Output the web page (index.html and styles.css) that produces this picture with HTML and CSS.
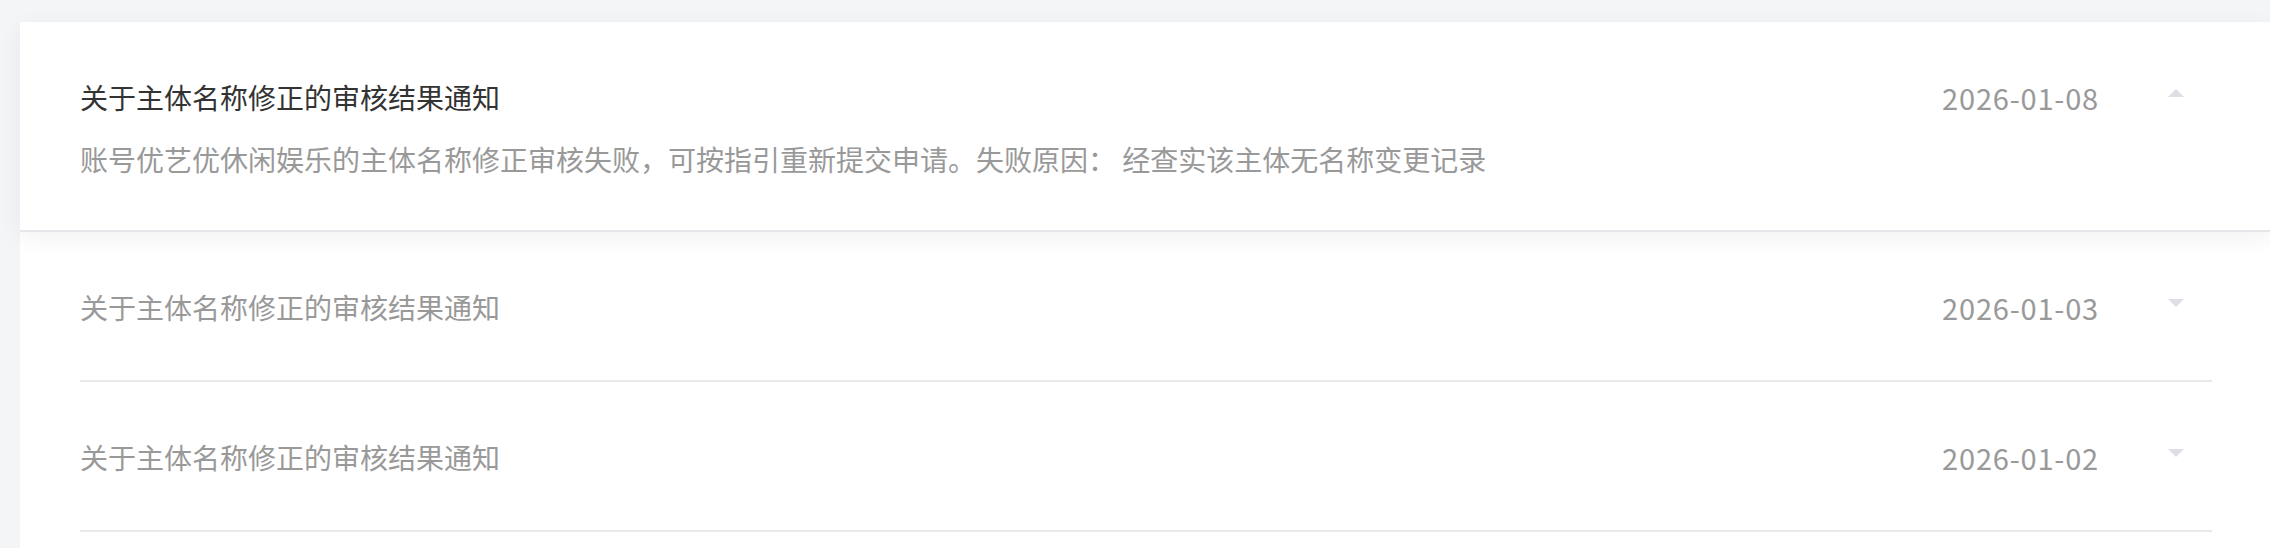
FILE: index.html
```html
<!DOCTYPE html>
<html lang="zh-CN">
<head>
<meta charset="utf-8">
<title>消息通知</title>
<link rel="stylesheet" href="styles.css">
</head>
<body>
<div class="page">
  <div class="list">
    <div class="item item--open">
      <div class="item-head">
        <span class="item-title">关于主体名称修正的审核结果通知</span>
        <span class="item-date">2026-01-08</span>
        <span class="caret caret--up"></span>
      </div>
      <div class="item-desc">账号优艺优休闲娱乐的主体名称修正审核失败，可按指引重新提交申请。失败原因： 经查实该主体无名称变更记录</div>
    </div>
    <div class="item">
      <div class="item-head">
        <span class="item-title">关于主体名称修正的审核结果通知</span>
        <span class="item-date">2026-01-03</span>
        <span class="caret caret--down"></span>
      </div>
    </div>
    <div class="item">
      <div class="item-head">
        <span class="item-title">关于主体名称修正的审核结果通知</span>
        <span class="item-date">2026-01-02</span>
        <span class="caret caret--down"></span>
      </div>
    </div>
  </div>
</div>
</body>
</html>
```

FILE: styles.css
```css
html, body {
  margin: 0;
  padding: 0;
}
body {
  background: #f4f5f7;
  font-family: "Noto Sans CJK SC", "Noto Sans", sans-serif;
  overflow: hidden;
}
.page {
  padding: 22px 0 0 20px;
}
.list {
  background: #ffffff;
  min-height: calc(100vh - 22px);
}
.item {
  margin: 0 58px 0 60px;
  padding: 54px 0 52px;
  border-bottom: 2px solid #e8e8ed;
}
.item--open {
  position: relative;
  z-index: 1;
  margin: 0;
  padding: 54px 58px 51px 60px;
  background: #ffffff;
  border-bottom: 2px solid #e6e6eb;
  box-shadow: 0 6px 22px rgba(30, 35, 60, 0.06);
}
.item-head {
  display: flex;
  align-items: center;
  height: 42px;
}
.item-title {
  flex: 1;
  font-size: 28px;
  line-height: 42px;
  color: #999999;
  white-space: nowrap;
}
.item--open .item-title {
  color: #333333;
}
.item-date {
  margin-right: 69px;
  font-size: 29px;
  line-height: 42px;
  color: #999999;
  letter-spacing: 0.8px;
}
.caret {
  width: 0;
  height: 0;
  margin-right: 28px;
  margin-bottom: 9px;
  border-left: 8px solid transparent;
  border-right: 8px solid transparent;
}
.caret--up {
  border-bottom: 8px solid #dedee4;
}
.caret--down {
  border-top: 8px solid #dedee4;
}
.item-desc {
  margin-top: 21px;
  font-size: 28px;
  line-height: 40px;
  color: #999999;
  white-space: nowrap;
}
```
